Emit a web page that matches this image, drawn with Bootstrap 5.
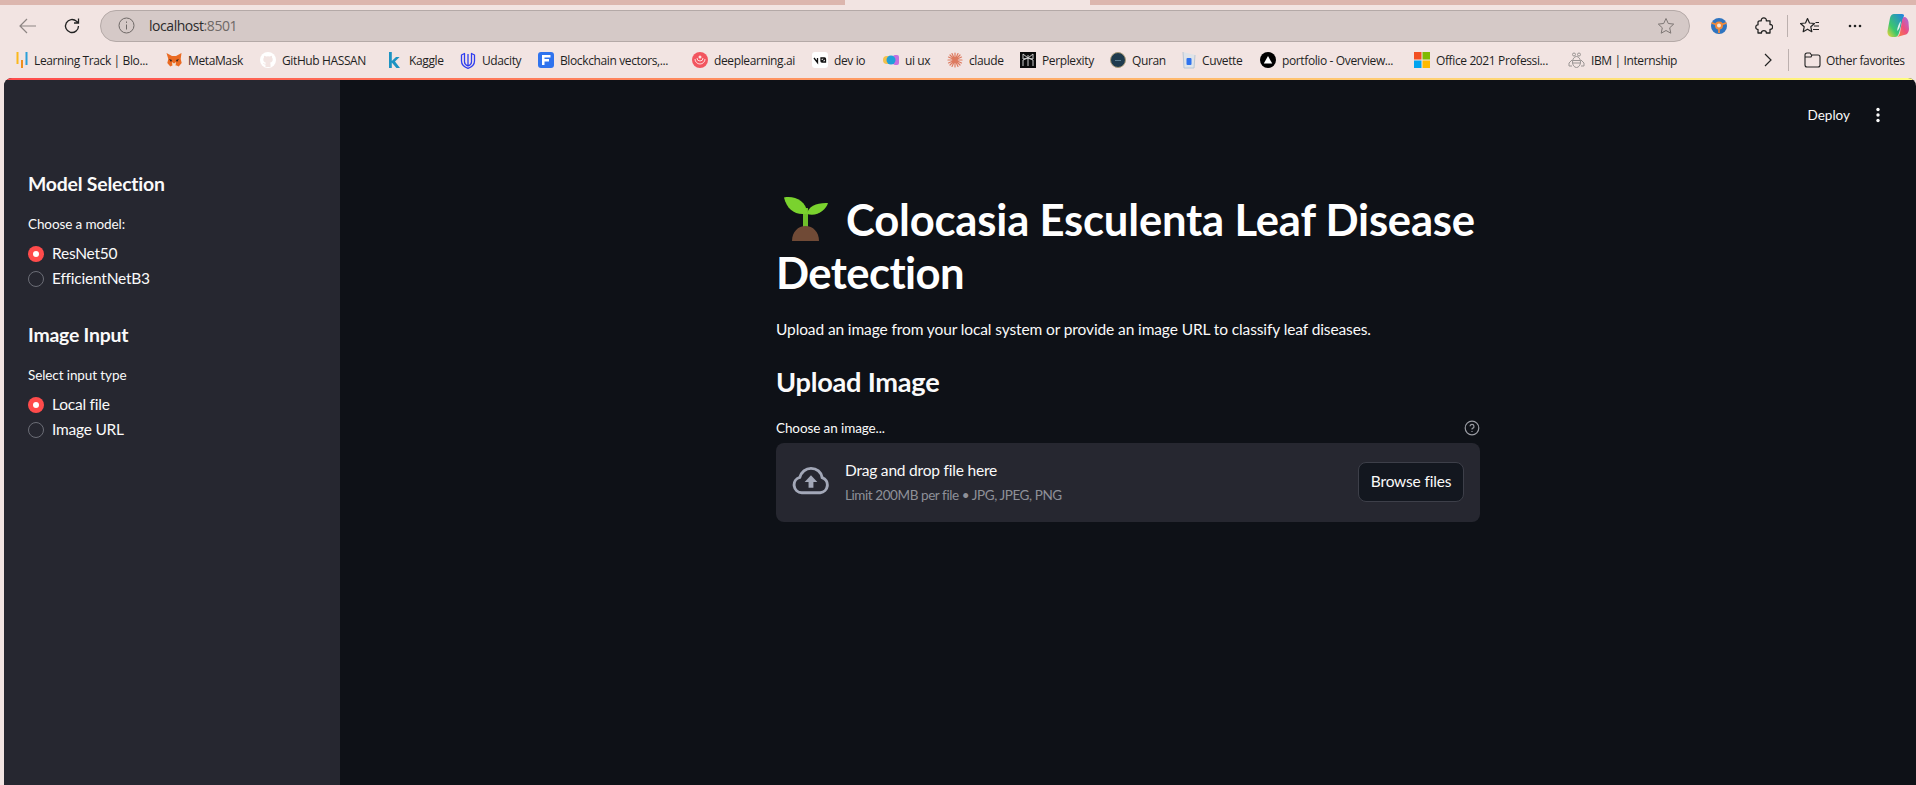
<!DOCTYPE html>
<html lang="en"><head><meta charset="utf-8"><title>Colocasia Esculenta Leaf Disease Detection</title>
<link href="https://cdn.jsdelivr.net/npm/bootstrap@5.3.0/dist/css/bootstrap.min.css" rel="stylesheet">
<style>
html,body{height:785px;overflow:hidden}
body{background:#f2e4e2;font-family:"Lato","Noto Sans",sans-serif;color:#fafafa}
svg{display:block;flex:none}
.tabstrip{height:5px;background:linear-gradient(90deg,#dcb6ae 0,#dcb6ae 845px,transparent 845px,transparent 1090px,#dcb6ae 1090px)}
.toolbar{height:38px;padding:3px 0 0 6px;color:#222}
.tool-slot{width:44px;height:32px;flex:none}
.addr{width:1590px;height:32px;margin-left:6px;flex:none;background:#d5c9c7;border:1px solid #b4a9a7;border-radius:16px;padding:0 14px 0 17px;font:14px "Open Sans","Liberation Sans",sans-serif;letter-spacing:-.45px;color:#2b2b2b}
.addr-port{color:#6e6866}
.addr-text{margin-left:14px}
.tools-right{margin-left:6.5px}
.tools-right .tool-slot{width:45px}
.tools-right .slot-end{width:34px;margin-left:3px}
.sep-v{width:1px;height:22px;background:#bcb0ae;flex:none}
.bookbar{height:35px;padding:0 0 1px 16px;font:12px "Open Sans","Liberation Sans",sans-serif;letter-spacing:-.38px;color:#1f1f1f;white-space:nowrap}
.bookgrid{display:grid;grid-template-columns:150px 94px 127px 73px 78px 154px 120px 71px 64px 73px 90px 72px 78px 154px 154px 104px;align-items:center}
.bk{display:flex;align-items:center;gap:6px}
.bk-end{margin-left:91px;gap:15px}
.bk-last{gap:5px}
.app{flex:1;margin-left:4px;border-radius:8px 8px 0 0;overflow:hidden;background:#0e1117}
.deco{height:2px;background:linear-gradient(90deg,#ff4b4b,#fffd80)}
.side{width:336px;background:#262730;padding:90px 24px 0;flex:none}
.side-h{font-size:19.4px;line-height:28px;font-weight:700;letter-spacing:-.2px;margin:0;color:#fafafa}
.side-label{font-size:13.5px;line-height:20px;margin-top:16px;letter-spacing:-.1px}
.radios{margin-top:7.5px}
.rd{height:25px;font-size:15.5px;gap:8px;letter-spacing:-.22px}
.dot{width:16px;height:16px;border-radius:50%;border:1px solid #6b6d76;flex:none}
.dot-on{background:#ff4b4b;border:0;display:flex;align-items:center;justify-content:center}
.dot-on::after{content:"";width:6px;height:6px;border-radius:50%;background:#fff}
.side-gap{margin-top:29.5px}
.main-col{min-width:0}
.topbar{padding:25px 30px 0 0;height:113px;gap:20px;font-size:13.5px;line-height:20px}
.content{width:704px}
.title{font-size:43.6px;line-height:53px;font-weight:700;margin:0;white-space:nowrap;letter-spacing:-.57px;color:#fff}
.title-text{margin-left:17px;letter-spacing:-.19px}
.seed{display:inline-block;vertical-align:-5px;margin-left:8px}
.intro{font-size:15.5px;line-height:24px;margin:17.5px 0 0;letter-spacing:-.11px}
.upl{font-size:27.2px;line-height:34px;font-weight:700;margin:24px 0 0;letter-spacing:-.25px;color:#fafafa}
.choose{margin-top:19px;font-size:13.5px;line-height:20px;letter-spacing:-.1px}
.drop{height:79px;margin-top:5px;background:#262730;border-radius:8px;padding:0 16px}
.drop-title{font-size:15.5px;line-height:22px;letter-spacing:-.2px}
.drop-sub{font-size:13.5px;line-height:20px;color:#8e9098;margin-top:4px;letter-spacing:-.42px}
.browse{width:106px;height:40px;background:#13171f;border:1px solid #3d3f49;border-radius:8px;color:#fafafa;font-size:15.5px;letter-spacing:-.18px;padding:0}
.browse:hover{background:#13171f;color:#fafafa}
</style></head>
<body class="d-flex flex-column">
<div class="tabstrip"></div>
<div class="toolbar d-flex align-items-center">
  <div class="tool-slot d-flex align-items-center justify-content-center"><svg width="20" height="20" viewBox="0 0 20 20" fill="none" stroke="#8d8583" stroke-width="1.2"><path d="M18 10H2M9 3l-7 7 7 7"/></svg></div>
  <div class="tool-slot d-flex align-items-center justify-content-center"><svg width="18" height="18" viewBox="0 0 18 18" fill="none" stroke="#222" stroke-width="1.3"><path d="M15.5 9a6.5 6.5 0 1 1-2-4.7L15.5 6M15.5 1.5V6H11"/></svg></div>
  <div class="addr d-flex align-items-center">
    <svg width="17" height="17" viewBox="0 0 17 17" fill="none" stroke="#6e6866"><circle cx="8.5" cy="8.5" r="7.5"/><path d="M8.5 7.5v5M8.5 4.5v1.4"/></svg>
    <span class="addr-text">localhost<span class="addr-port">:8501</span></span>
    <svg class="ms-auto" width="18" height="18" viewBox="0 0 18 18" fill="none" stroke="#7d7674" stroke-linejoin="round"><path d="M9 1.5l2.3 5 5.4.6-4 3.7 1.1 5.4L9 13.500l-4.800 2.700 1.100-5.400-4-3.700 5.400-.6z"/></svg>
  </div>
  <div class="tools-right d-flex align-items-center">
    <div class="tool-slot d-flex align-items-center justify-content-center"><svg width="16" height="16" viewBox="0 0 16 16"><circle cx="8" cy="8" r="8" fill="#2f74c0"/><path d="M.6 4.800L5 6.500M15.400 4.800L11 6.500M8 11v4" stroke="#f08a3c" stroke-width="1.800"/><circle cx="8" cy="7.500" r="3" fill="#f5e6dc" stroke="#f08a3c" stroke-width="2"/></svg></div>
    <div class="tool-slot d-flex align-items-center justify-content-center"><svg width="18" height="18" viewBox="0 0 18 18" fill="none" stroke="#222" stroke-width="1.300" stroke-linejoin="round"><path d="M6.300 3.800C6 2 7.300.9 8.800.9s2.800 1.100 2.500 2.900H15V7.500c1.700-.2 2.600 1 2.600 2.400S16.700 12.500 15 12.300V16h-3.700c.2-1.500-.9-2.400-2.400-2.400S6.300 14.500 6.500 16H3v-3.500c-1.300.1-2.200-.9-2.200-2.300S1.700 7.700 3 7.800V5.500c0-1 .7-1.700 1.700-1.700z"/></svg></div>
    <div class="sep-v"></div>
    <div class="tool-slot d-flex align-items-center justify-content-center"><svg width="20" height="18" viewBox="0 0 20 18" fill="none" stroke="#222" stroke-width="1.200" stroke-linejoin="round"><path d="M7.500 1.500L9.500 6l5 .5-3.700 3.300 1 4.900-4.300-2.500-4.300 2.500 1-4.900L.5 6.500l5-.5z"/><path d="M14 9h5M13 12.500h6M15.500 5.500H19"/></svg></div>
    <div class="tool-slot d-flex align-items-center justify-content-center"><svg width="16" height="4" viewBox="0 0 16 4" fill="#222"><circle cx="3" cy="2" r="1.300"/><circle cx="8" cy="2" r="1.300"/><circle cx="13" cy="2" r="1.300"/></svg></div>
    <div class="tool-slot slot-end d-flex align-items-center justify-content-center"><svg width="22" height="26" viewBox="0 0 22 26"><defs><linearGradient id="cpa" x1="0" y1="1" x2="1" y2="0"><stop offset="0" stop-color="#f2d534"/><stop offset=".35" stop-color="#3cc76c"/><stop offset="1" stop-color="#1f7fe6"/></linearGradient><linearGradient id="cpb" x1="0" y1="1" x2="1" y2="0"><stop offset="0" stop-color="#f9873a"/><stop offset=".5" stop-color="#ee4f7c"/><stop offset="1" stop-color="#a66de8"/></linearGradient></defs><path d="M7 1h8c1.500 0 2 .8 2 1.500L12 20c-.8 2.500-2 4-4 4H5C2 24 0 21 .5 18L3 5C3.600 2.500 5 1 7 1z" fill="url(#cpa)"/><path d="M17 4c2.500 0 4 2 4.500 5l.5 7c0 3-2 6-5 6l-7 2c1.500-1 2.500-2.500 3-4.500L15 8c.4-2 1-4 2-4z" fill="url(#cpb)"/><path d="M14 8c-2 2-3.500 6-4 10 1.500-1 2.500-3 3-5z" fill="#fff" opacity=".85"/></svg></div>
  </div>
</div>
<div class="bookbar d-flex align-items-center">
  <div class="bookgrid">
    <div class="bk"><svg width="12" height="16" viewBox="0 0 12 16"><path d="M1.500 0v12" stroke="#fbb81c" stroke-width="2"/><path d="M6 8v8" stroke="#ee8f1e" stroke-width="2"/><path d="M10.500 0v13" stroke="#2b9fd9" stroke-width="2"/></svg><span>Learning Track | Blo...</span></div>
    <div class="bk"><svg width="16" height="16" viewBox="0 0 16 16"><path d="M.5 1L6 4h4l5.500-3-.8 6 1 4-3 3.500-2-1H6.300l-2 1-3-3.500 1-4z" fill="#ea6a22"/><path d="M6 10l2 1.500L10 10l-.5 4h-3z" fill="#efe4d8"/><path d="M3 7l3 1-1 2zM13 7l-3 1 1 2z" fill="#33231a"/></svg><span>MetaMask</span></div>
    <div class="bk"><svg width="16" height="16" viewBox="0 0 16 16"><circle cx="8" cy="8" r="8" fill="#fff"/><path d="M5.500 15v-2.500c-1.800.3-2.300-.7-2.700-1.400.9 0 1.400.8 2.700.9 0-.6.200-1 .5-1.300C4 10.400 3.300 9.200 3.300 7.500c0-.9.300-1.500.7-2-.1-.5-.1-1.200.2-1.800.7 0 1.300.4 1.900.8a6.500 6.500 0 0 1 3.800 0c.6-.4 1.200-.8 1.900-.8.300.6.300 1.300.2 1.800.4.500.7 1.100.7 2 0 1.700-.7 2.900-2.700 3.200.3.300.5.800.5 1.500V15z" fill="#f2e4e2"/></svg><span>GitHub HASSAN</span></div>
    <div class="bk"><svg width="16" height="16" viewBox="0 0 16 16" fill="#1d93c2"><path d="M2 0h2.800v9L9 5h3.600L8 9.500 13 16H9.400L4.800 10.500V16H2z"/></svg><span>Kaggle</span></div>
    <div class="bk"><svg width="16" height="17" viewBox="0 0 16 17" fill="none" stroke="#2e3ef0" stroke-width="1.300" stroke-linejoin="round"><path d="M1.500 3L4.500 1.500V10Q4.500 12.500 8 14Q11.500 12.500 11.500 10V1.500L14.500 3V9Q14.500 14 8 16.300Q1.500 14 1.500 9zM8 2V14"/></svg><span>Udacity</span></div>
    <div class="bk"><svg width="16" height="16" viewBox="0 0 16 16"><rect width="16" height="16" rx="3" fill="#2f73ee"/><path d="M4 3h8.500v2.500h-6V7H11v2.500H6.500V13H4z" fill="#fff"/></svg><span>Blockchain vectors,...</span></div>
    <div class="bk"><svg width="16" height="16" viewBox="0 0 16 16"><circle cx="8" cy="8" r="8" fill="#f2555f"/><path d="M3 7a5 5 0 0 0 10 0M5 6a3 3 0 0 0 6 0" fill="none" stroke="#fdd" stroke-width="1"/><circle cx="8" cy="5" r="1.500" fill="#fdd"/></svg><span>deeplearning.ai</span></div>
    <div class="bk"><svg width="16" height="16" viewBox="0 0 16 16"><rect width="16" height="16" rx="3" fill="#fff"/><path d="M2 6l3.500 4.500V6M9 6h3.500a1 1 0 0 1 1 1v3H10a1 1 0 0 1-1-1zM9.500 9.500l3.500-3" fill="none" stroke="#111" stroke-width="1.300"/></svg><span>dev io</span></div>
    <div class="bk"><svg width="16" height="12" viewBox="0 0 16 12"><circle cx="4" cy="6" r="4" fill="#f2c14b"/><rect x="10" y="1" width="6" height="10" rx="2" fill="#c46fe0"/><circle cx="8" cy="6" r="4.500" fill="#1f9fd8"/></svg><span>ui ux</span></div>
    <div class="bk"><svg width="16" height="16" viewBox="0 0 16 16" stroke="#dd7a5f" stroke-width="1.200" stroke-linecap="round"><path d="M8 1v14M1 8h14M3 3l10 10M13 3L3 13M5 1.500l6 13M11 1.500l-6 13M1.500 5l13 6M14.500 5l-13 6"/></svg><span>claude</span></div>
    <div class="bk"><svg width="16" height="16" viewBox="0 0 16 16"><rect width="16" height="16" fill="#0a0a0a"/><path d="M3 2l5 4 5-4v5l-5-1-5 1zM3 14V8l5-2 5 2v6M8 3v11" fill="none" stroke="#c8c8c8"/></svg><span>Perplexity</span></div>
    <div class="bk"><svg width="16" height="16" viewBox="0 0 16 16"><circle cx="8" cy="8" r="7.500" fill="#1f3b4e" stroke="#a89a78"/><path d="M5 8.500h6" stroke="#5d7f92"/></svg><span>Quran</span></div>
    <div class="bk"><svg width="14" height="18" viewBox="0 0 14 18"><path d="M1 1l1 16h10l1-13" fill="#dfe3e8" stroke="#b9c6d4"/><rect x="4.500" y="7" width="5" height="7" rx="1" fill="#2e72ee"/></svg><span>Cuvette</span></div>
    <div class="bk"><svg width="16" height="16" viewBox="0 0 16 16"><circle cx="8" cy="8" r="8" fill="#000"/><path d="M8 4l4.200 7.500H3.800z" fill="#fff"/></svg><span>portfolio - Overview...</span></div>
    <div class="bk"><svg width="16" height="16" viewBox="0 0 16 16"><rect width="7.500" height="7.500" fill="#f25022"/><rect x="8.500" width="7.500" height="7.500" fill="#7fba00"/><rect y="8.500" width="7.500" height="7.500" fill="#00a4ef"/><rect x="8.500" y="8.500" width="7.500" height="7.500" fill="#ffb900"/></svg><span>Office 2021 Professi...</span></div>
    <div class="bk"><svg width="17" height="17" viewBox="0 0 17 17" fill="none" stroke="#9a9594"><circle cx="6" cy="2.500" r="1.500"/><circle cx="11" cy="2.500" r="1.500"/><ellipse cx="8.500" cy="10" rx="4" ry="5.500"/><path d="M4.500 8.500h8M4.500 11h8M4 8L1 11v3h3M13 8l3 3v3h-3"/></svg><span>IBM | Internship</span></div>
  </div>
  <div class="bk bk-end">
    <svg width="10" height="16" viewBox="0 0 10 16" fill="none" stroke="#222" stroke-width="1.200"><path d="M2 2l6 6-6 6"/></svg>
    <div class="sep-v"></div>
    <div class="bk bk-last"><svg width="17" height="16" viewBox="0 0 17 16" fill="none" stroke="#222" stroke-width="1.100"><path d="M1 3a2 2 0 0 1 2-2h3l1.500 2H14a2 2 0 0 1 2 2v8a2 2 0 0 1-2 2H3a2 2 0 0 1-2-2zM1 5h6l1-2"/></svg><span>Other favorites</span></div>
  </div>
</div>
<div class="app d-flex flex-column">
  <div class="deco"></div>
  <div class="d-flex flex-grow-1">
    <aside class="side">
      <h2 class="side-h">Model Selection</h2>
      <div class="side-label">Choose a model:</div>
      <div class="radios">
        <div class="rd d-flex align-items-center"><span class="dot dot-on"></span><span>ResNet50</span></div>
        <div class="rd d-flex align-items-center"><span class="dot"></span><span>EfficientNetB3</span></div>
      </div>
      <h2 class="side-h side-gap">Image Input</h2>
      <div class="side-label">Select input type</div>
      <div class="radios">
        <div class="rd d-flex align-items-center"><span class="dot dot-on"></span><span>Local file</span></div>
        <div class="rd d-flex align-items-center"><span class="dot"></span><span>Image URL</span></div>
      </div>
    </aside>
    <main class="main-col flex-grow-1">
      <div class="topbar d-flex justify-content-end align-items-start">
        <span>Deploy</span>
        <svg width="16" height="20" viewBox="0 0 16 20" fill="#fafafa"><circle cx="8" cy="4.500" r="1.700"/><circle cx="8" cy="10" r="1.700"/><circle cx="8" cy="15.500" r="1.700"/></svg>
      </div>
      <div class="content mx-auto">
        <h1 class="title"><svg class="seed" width="45" height="45" viewBox="0 0 45 45"><rect x="19" y="12" width="5" height="21" fill="#6fbf2a"/><path d="M0 1.500C10 -.5 22 4 23.500 17.500 12 20 3 14 0 1.500z" fill="#7ad22e"/><path d="M23 18C24 10 33 6.500 44 7 42 14 33 21 23 18z" fill="#7ad22e"/><path d="M8 45C8 36 14 30 21.500 30 29 30 35 36 35 45z" fill="#704a36"/></svg><span class="title-text">Colocasia Esculenta Leaf Disease</span><br>Detection</h1>
        <p class="intro">Upload an image from your local system or provide an image URL to classify leaf diseases.</p>
        <h2 class="upl">Upload Image</h2>
        <div class="choose d-flex justify-content-between align-items-center">
          <span>Choose an image...</span>
          <svg width="16" height="16" viewBox="0 0 16 16" fill="none" stroke="#9a9ca3" stroke-width="1.200"><circle cx="8" cy="8" r="6.800"/><path d="M6 6.300A2 2 0 1 1 8.500 8.300c-.4.200-.5.500-.5 1.100M8 11v1"/></svg>
        </div>
        <div class="drop d-flex align-items-center">
          <svg width="37" height="34" viewBox="0 0 38 34" fill="none"><path d="M10 28a8 8 0 0 1-2-15.700C9.500 7 14 3 19.500 3c6 0 10.500 4 11.500 9.500A8 8 0 0 1 29 28z" stroke="#a3a8b8" stroke-width="3"/><path d="M19.500 10l6.500 7h-4v6h-5v-6h-4z" fill="#a3a8b8"/></svg>
          <div class="ms-3">
            <div class="drop-title">Drag and drop file here</div>
            <div class="drop-sub">Limit 200MB per file • JPG, JPEG, PNG</div>
          </div>
          <button type="button" class="btn browse ms-auto">Browse files</button>
        </div>
      </div>
    </main>
  </div>
</div>
<script src="https://cdn.jsdelivr.net/npm/bootstrap@5.3.0/dist/js/bootstrap.bundle.min.js"></script>
</body></html>
